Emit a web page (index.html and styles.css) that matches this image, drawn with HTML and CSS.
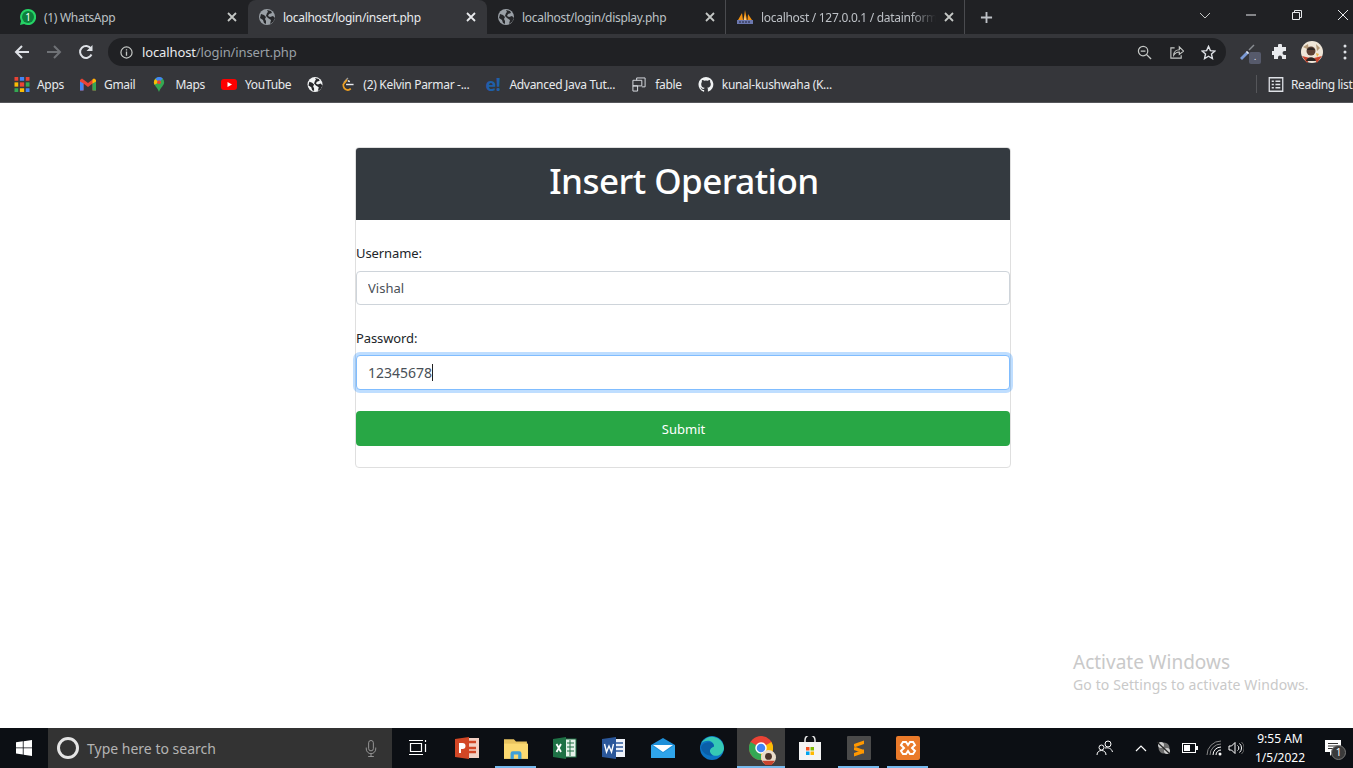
FILE: index.html
```html
<!DOCTYPE html>
<html lang="en">
<head>
    <meta charset="UTF-8">
    <title>Insert Operation</title>
    <link rel="stylesheet" href="styles.css">
</head>
<body>
<svg class="defs" width="0" height="0">
    <symbol id="globe" viewBox="0 0 16 16">
        <circle cx="8" cy="8" r="8" fill="currentColor"/>
        <path d="M2 5l3 1 2 2-1 2 1 2v3l-2-1-1-3-3-2zM8 1l4 1 1 2-3 1-1 2 2 1 3-1 2 2-2 4-3 2 1-4-3-2-2-2 1-3 1-1z" fill="#26272a"/>
    </symbol>
    <symbol id="close" viewBox="0 0 10 10">
        <path d="M1 1l8 8M9 1l-8 8" stroke="currentColor" stroke-width="1.8" fill="none"/>
    </symbol>
</svg>

<!-- tab strip -->
<div class="tabstrip">
    <div class="tab">
        <svg class="fav" viewBox="0 0 16 16"><path d="M8 0a8 8 0 0 0-6.900 12L0 16l4.100-1.100A8 8 0 1 0 8 0z" fill="#25d366"/><circle cx="8" cy="8" r="6" fill="#0d7f3c"/><text x="8" y="11.500" class="fav-num">1</text></svg>
        <span class="tab-title">(1) WhatsApp</span>
        <svg class="tab-close"><use href="#close"/></svg>
    </div>
    <div class="tab active">
        <svg class="fav"><use href="#globe"/></svg>
        <span class="tab-title">localhost/login/insert.php</span>
        <svg class="tab-close"><use href="#close"/></svg>
    </div>
    <div class="tab sep">
        <svg class="fav"><use href="#globe"/></svg>
        <span class="tab-title">localhost/login/display.php</span>
        <svg class="tab-close"><use href="#close"/></svg>
    </div>
    <div class="tab sep">
        <svg class="fav" viewBox="0 0 16 16"><path d="M1 11L5 4l1 7zM6.500 11L8 1l2 10zM10.500 11L11 5l4 6z" fill="#f29111"/><path d="M7 11l1-5 1 5z" fill="#fbd38a"/><rect x="0" y="11" width="16" height="4" fill="#6c78af"/><path d="M2 13h12" stroke="#20243c" stroke-dasharray="2 1"/></svg>
        <span class="tab-title fade">localhost / 127.0.0.1 / datainform</span>
        <svg class="tab-close"><use href="#close"/></svg>
    </div>
    <svg class="newtab" viewBox="0 0 14 14"><path d="M7 1v12M1 7h12" stroke="#bdc1c6" stroke-width="2"/></svg>
    <div class="winctl">
        <svg viewBox="0 0 12 12"><path d="M1 4l5 5 5-5" stroke="#c4c7c5" fill="none"/></svg>
        <svg viewBox="0 0 12 12"><path d="M1 6h10" stroke="#e8eaed"/></svg>
        <svg viewBox="0 0 12 12"><path d="M1.500 3.500h7v7h-7zM3.500 3.500v-2h7v7h-2" stroke="#e8eaed" fill="none"/></svg>
        <svg viewBox="0 0 12 12"><path d="M1 1l10 10M11 1L1 11" stroke="#e8eaed" fill="none"/></svg>
    </div>
</div>

<!-- address bar -->
<div class="toolbar">
    <div class="nav">
        <svg viewBox="0 0 16 16"><path d="M15 8H2M8 2L2 8l6 6" stroke="#dee1e6" stroke-width="2" fill="none"/></svg>
        <svg viewBox="0 0 16 16"><path d="M1 8h13M8 2l6 6-6 6" stroke="#6f7276" stroke-width="2" fill="none"/></svg>
        <svg viewBox="0 0 16 16"><path d="M13.500 10.500A6 6 0 1 1 13 4.500" stroke="#dee1e6" stroke-width="2" fill="none"/><path d="M14.500 1v6h-6z" fill="#dee1e6"/></svg>
    </div>
    <div class="omnibox">
        <svg class="info" viewBox="0 0 14 14"><circle cx="7" cy="7" r="6" stroke="#c4c7c5" stroke-width="1.300" fill="none"/><path d="M7 6v4.500M7 3.500v1.300" stroke="#c4c7c5" stroke-width="1.400"/></svg>
        <span class="url"><b>localhost</b>/login/insert.php</span>
        <div class="omni-actions">
            <svg viewBox="0 0 16 16"><circle cx="6.500" cy="6.500" r="5" stroke="#c4c7c5" stroke-width="1.300" fill="none"/><path d="M4 6.500h5M10 10l5 5" stroke="#c4c7c5" stroke-width="1.500"/></svg>
            <svg viewBox="0 0 16 16"><path d="M6 3H2v11h11v-3" stroke="#c4c7c5" stroke-width="1.200" fill="none"/><path d="M5 11c0-4 3-6 6-6V2l4.500 4.500L11 10V7.500C8.500 7.500 6.500 8.500 5 11z" stroke="#c4c7c5" stroke-width="1.200" fill="none"/></svg>
            <svg viewBox="0 0 16 16"><path d="M8 1.500l2 4.500 4.800.5-3.600 3.200 1 4.800L8 12l-4.200 2.500 1-4.800L1.200 6.500 6 6z" stroke="#dee1e6" stroke-width="1.500" fill="none"/></svg>
        </div>
    </div>
    <div class="ext">
        <span class="ext-pen">
            <svg viewBox="0 0 16 16"><path d="M0 14l7-7 2 2-7 7z" fill="#7b9ad6"/><path d="M7 7l2 2-1 1-2-2z" fill="#e8eaed"/><path d="M9 6l5-5" stroke="#8a8d92" stroke-width="1.500"/></svg>
            <span class="ext-badge">.</span>
        </span>
        <svg viewBox="0 0 16 16"><path d="M6 1.500a2 2 0 0 1 4 0V3h4v4h-1.500a2 2 0 0 0 0 4H14v4h-4v-1.500a2 2 0 0 0-4 0V15H2v-4H.500a2 2 0 0 1 0-4H2V3h4z" fill="#e8eaed"/></svg>
        <svg class="avatar" viewBox="0 0 22 22"><circle cx="11" cy="11" r="11" fill="#efe6d8"/><path d="M2 6l5-3 1 6zM15 3l4 4-3 3z" fill="#b59a78"/><path d="M1 15l8 2-3 5zM21 15l-8 2 3 5z" fill="#c8452f"/><circle cx="10" cy="10" r="4.500" fill="#5b4034"/><path d="M6 9c1-3 7-3 8 0z" fill="#2c2522"/><path d="M5 20c1-5 9-5 10 0z" fill="#2c2522"/><path d="M15 12l3 1-2 3z" fill="#e9b44c"/></svg>
        <svg viewBox="0 0 4 16"><path d="M2 2v.1M2 8v.1M2 14v.1" stroke="#dee1e6" stroke-width="3" stroke-linecap="round"/></svg>
    </div>
</div>

<!-- bookmarks -->
<div class="bookmarks">
    <div class="bm bm-apps">
        <svg class="bm-ico" viewBox="0 0 14 14"><path d="M0 0h3.500v3.500H0z" fill="#ea4335"/><path d="M5 0h4v3.500H5z" fill="#4285f4"/><path d="M10.500 0H14v3.500h-3.500z" fill="#ea4335"/><path d="M0 5h3.500v4H0z" fill="#fbbc05"/><path d="M5 5h4v4H5z" fill="#ea4335"/><path d="M10.500 5H14v4h-3.500z" fill="#34a853"/><path d="M0 10.500h3.500V14H0z" fill="#34a853"/><path d="M5 10.500h4V14H5z" fill="#fbbc05"/><path d="M10.500 10.500H14V14h-3.500z" fill="#4285f4"/></svg>
        Apps
    </div>
    <div class="bm">
        <svg class="bm-ico" viewBox="0 0 16 12"><path d="M0 1.500V12h3.500V5L8 8.500 12.500 5v7H16V1.500L14 0 8 4.500 2 0z" fill="#ea4335"/><path d="M0 3v9h3.500V5z" fill="#4285f4"/><path d="M16 3v9h-3.500V5z" fill="#34a853"/><path d="M14 0l2 1.500V3l-3.500 2V1z" fill="#fbbc05"/></svg>
        Gmail
    </div>
    <div class="bm">
        <svg class="bm-ico" viewBox="0 0 14 16"><path d="M7 0a5.500 5.500 0 0 0-5.500 5.500C1.500 9 5.500 11 7 16c1.500-5 5.500-7 5.500-10.500A5.500 5.500 0 0 0 7 0z" fill="#34a853"/><path d="M3 2a5.500 5.500 0 0 1 8-.500L7 5.500z" fill="#4285f4"/><path d="M1.500 5.500c0 1 .3 1.800.8 2.700L7 5.500 3 2a5.500 5.500 0 0 0-1.500 3.500z" fill="#fbbc05"/><circle cx="7" cy="5.500" r="2" fill="#ea4335"/></svg>
        Maps
    </div>
    <div class="bm">
        <svg class="bm-ico" viewBox="0 0 16 12"><rect width="16" height="11" y=".5" rx="3" fill="#f00"/><path d="M6.500 3.500v5L11 6z" fill="#fff"/></svg>
        YouTube
    </div>
    <div class="bm">
        <svg class="bm-ico globe-bm"><use href="#globe"/></svg>
    </div>
    <div class="bm">
        <svg class="bm-ico" viewBox="0 0 16 16"><path d="M9 1L4.500 6" stroke="#9a9a9a" stroke-width="1.500" fill="none"/><path d="M8 3L4 8c0 3 2 5.500 5 6 1 0 2-.5 3-1.500" stroke="#f0a020" stroke-width="1.800" fill="none"/><path d="M7 8h8" stroke="#e8eaed" stroke-width="1.500"/><path d="M11 5L9 4" stroke="#e8eaed" stroke-width="1.500"/></svg>
        (2) Kelvin Parmar -...
    </div>
    <div class="bm">
        <span class="bm-ico edu">e!</span>
        Advanced Java Tut...
    </div>
    <div class="bm">
        <svg class="bm-ico" viewBox="0 0 16 16"><path d="M5.500 3.500V1h9v9.500H11M1.500 3.500H11v6H1.500zM1.500 9.500h5V15h-5z" stroke="#dee1e6" fill="none"/></svg>
        fable
    </div>
    <div class="bm">
        <svg class="bm-ico" viewBox="0 0 16 16"><path d="M8 0a8 8 0 0 0-2.500 15.600c.4.100.5-.2.500-.4v-1.400c-2.200.5-2.700-1-2.700-1-.4-.9-.9-1.200-.9-1.200-.7-.5.100-.5.100-.5.800.1 1.200.8 1.200.8.700 1.200 1.900.9 2.300.7.100-.5.300-.9.500-1.100-1.800-.2-3.600-.9-3.600-4 0-.9.300-1.600.8-2.100-.1-.2-.4-1 .1-2.100 0 0 .7-.2 2.200.8a7.500 7.500 0 0 1 4 0c1.500-1 2.200-.8 2.200-.8.400 1.100.2 1.900.1 2.100.5.600.8 1.300.8 2.100 0 3.100-1.900 3.700-3.700 3.900.3.300.6.700.6 1.500v2.200c0 .2.100.5.600.4A8 8 0 0 0 8 0z" fill="#f1f3f4"/></svg>
        kunal-kushwaha (K...
    </div>
    <div class="reading">
        <svg class="bm-ico" viewBox="0 0 14 14"><path d="M.7.700h12.600v12.600H.7z" stroke="#dee1e6" stroke-width="1.200" fill="none"/><path d="M3 4h2M6.500 4H11M3 7h2M6.500 7H11M3 10h2M6.500 10H11" stroke="#dee1e6" stroke-width="1.300"/></svg>
        Reading list
    </div>
</div>

<!-- page -->
<main class="page">
    <div class="card">
        <h1 class="card-head">Insert Operation</h1>
        <form class="card-body">
            <label class="lbl" for="username">Username:</label>
            <input class="field" id="username" type="text" value="Vishal">
            <label class="lbl" for="password">Password:</label>
            <div class="field-wrap">
                <input class="field focused" id="password" type="text" value="12345678">
                <span class="caret"></span>
            </div>
            <button class="submit" type="button">Submit</button>
        </form>
    </div>
    <div class="activate">
        <div class="activate-big">Activate Windows</div>
        <div class="activate-small">Go to Settings to activate Windows.</div>
    </div>
</main>

<!-- taskbar -->
<footer class="taskbar">
    <div class="start">
        <svg viewBox="0 0 16 16"><path d="M0 2.300l6.800-1v6.200H0zM7.600 1.200L16 0v7.500H7.600zM0 8.300h6.800v6.300l-6.800-1zM7.600 8.300H16V16l-8.400-1.200z" fill="#fff"/></svg>
    </div>
    <div class="search">
        <span class="cortana"></span>
        <span class="search-text">Type here to search</span>
        <svg class="mic" viewBox="0 0 12 18"><rect x="3.500" y=".5" width="5" height="11" rx="2.500" stroke="#9a9a9a" fill="none"/><path d="M1 8v1.500a5 5 0 0 0 10 0V8M6 14.500v3M3 17.500h6" stroke="#9a9a9a" fill="none"/></svg>
    </div>
    <div class="apps">
        <div class="app app-view"><svg viewBox="0 0 18 18"><path d="M1.500 4.500h11v8h-11zM0 1.500h14M0 15.500h14M16.500 1v2M16.500 5v8" stroke="#fff" stroke-width="1.200" fill="none"/></svg></div>
        <div class="app"><svg viewBox="0 0 24 22"><rect x="11" y="1" width="13" height="20" fill="#f3d0c4"/><path d="M14 5h7M14 11h7M14 15h7" stroke="#d24726" stroke-width="2.500"/><path d="M0 2l14-2v22L0 20z" fill="#d24726"/><path d="M4 6h3.500a2.500 2.500 0 0 1 0 6H6v4H4z" fill="#fff"/></svg></div>
        <div class="app on"><svg viewBox="0 0 22 20"><path d="M0 2h9l2 2h10v5H0z" fill="#e8c35f"/><rect y="6" width="22" height="14" fill="#fbd971"/><path d="M6 20v-5a2 2 0 0 1 2-2h6a2 2 0 0 1 2 2v5h-3v-4H9v4z" fill="#3f9fd8"/></svg></div>
        <div class="app"><svg viewBox="0 0 24 22"><rect x="11" y="2" width="12" height="18" fill="#e6f2ea" stroke="#1e7145"/><path d="M14 6h7M14 10h7M14 14h7M17 3v16" stroke="#1e7145" stroke-width="1"/><path d="M0 2l13-2v22L0 20z" fill="#1e7145"/><path d="M3.500 7l4.500 8M8 7l-4.500 8" stroke="#fff" stroke-width="1.800"/></svg></div>
        <div class="app"><svg viewBox="0 0 24 22"><rect x="11" y="2" width="12" height="18" fill="#eef2fa"/><path d="M14 6h7M14 10h7M14 14h7" stroke="#2b579a" stroke-width="1.600"/><path d="M0 2l14-2v22L0 20z" fill="#2b579a"/><path d="M2.500 7l2 8 2.500-6 2.500 6 2-8" stroke="#fff" stroke-width="1.400" fill="none"/></svg></div>
        <div class="app"><svg viewBox="0 0 24 20"><path d="M0 7L12 0l12 7v13H0z" fill="#1f8fd8"/><path d="M2 7h20l-10 7z" fill="#fff"/><path d="M0 7l12 8 12-8v13H0z" fill="#2fa4ea"/></svg></div>
        <div class="app"><svg viewBox="0 0 24 24"><circle cx="12" cy="12" r="12" fill="#0c74c4"/><path d="M24 12A12 12 0 0 0 1 8c3-4 12-5 13 2 0 1-3 1-4 4-1 5 6 8 11 4 2-2 3-4 3-6z" fill="#36c9b4"/><path d="M14 10c0 1-3 1-4 4-.600 2.500 1 4.500 3 5.500-6 1-11-3-12-8 .5-5 12-8 13-1.500z" fill="#0a5fa8"/></svg></div>
        <div class="app on active">
            <svg viewBox="0 0 24 24"><circle cx="12" cy="12" r="12" fill="#ea4335"/><path d="M12 12L22.400 6A12 12 0 0 1 12 24z" fill="#fbbc05"/><path d="M12 12L12 24A12 12 0 0 1 1.600 6z" fill="#34a853"/><circle cx="12" cy="12" r="5" fill="#4285f4" stroke="#fff" stroke-width="1.500"/></svg>
            <svg class="chrome-face" viewBox="0 0 14 14"><circle cx="7" cy="7" r="7" fill="#e8dccb"/><circle cx="7" cy="6" r="3.200" fill="#4a332a"/><path d="M1 10h12l-3 4H4z" fill="#c8452f"/></svg>
        </div>
        <div class="app"><svg viewBox="0 0 22 24"><path d="M6 6V4a5 5 0 0 1 10 0v2" stroke="#e8e8e8" stroke-width="1.500" fill="none"/><rect y="6" width="22" height="18" fill="#f4f4f4"/><path d="M7 11h3.500v3.500H7z" fill="#f25022"/><path d="M11.500 11H15v3.500h-3.500z" fill="#7fba00"/><path d="M7 15.500h3.500V19H7z" fill="#00a4ef"/><path d="M11.500 15.500H15V19h-3.500z" fill="#ffb900"/></svg></div>
        <div class="app on"><svg viewBox="0 0 24 24"><rect width="24" height="24" rx="1" fill="#4a4a4a"/><path d="M17 4.500L7 8v3.500L17 8zM7 10.500L17 14v3.500L7 14zM17 13.500V17L7 20.500V17z" fill="#ff9800"/></svg></div>
        <div class="app on"><svg viewBox="0 0 24 24"><rect width="24" height="24" rx="2" fill="#ea7a2a"/><path d="M7 6h3l2 3 2-3h3l2 3-3 3 3 3-2 3h-3l-2-3-2 3H7l-2-3 3-3-3-3z" stroke="#fff" stroke-width="2" fill="none"/></svg></div>
    </div>
    <div class="tray">
        <svg class="t-people" viewBox="0 0 18 16"><circle cx="12" cy="4" r="3" stroke="#fff" fill="none"/><circle cx="5.500" cy="7.500" r="2.500" stroke="#fff" fill="none"/><path d="M1 15c0-3 2-4.500 4.500-4.500S10 12 10 15M9 8c3-.5 6.500 0 7.500 4" stroke="#fff" fill="none"/></svg>
        <svg class="t-chev" viewBox="0 0 12 8"><path d="M1 7l5-5 5 5" stroke="#fff" fill="none" stroke-width="1.200"/></svg>
        <svg class="t-net" viewBox="0 0 16 16"><circle cx="8" cy="8" r="5.500" fill="#6f6f6f"/><circle cx="5" cy="5" r="3" fill="#d0d0d0"/><circle cx="11" cy="11" r="3" fill="#d0d0d0"/><path d="M1 2l13 12" stroke="#222" stroke-width="1.200"/></svg>
        <svg class="t-bat" viewBox="0 0 16 10"><rect x=".5" y=".5" width="13" height="9" stroke="#fff" fill="none"/><rect x="2" y="2" width="6" height="6" fill="#fff"/><path d="M14 3h2v4h-2z" fill="#fff"/></svg>
        <svg class="t-wifi" viewBox="0 0 16 16"><path d="M1 15A14 14 0 0 1 15 1M4 15A11 11 0 0 1 15 4" stroke="#888" fill="none"/><path d="M7 15a8 8 0 0 1 8-8M10 15a5 5 0 0 1 5-5" stroke="#fff" fill="none"/><circle cx="14" cy="14" r="1.500" fill="#fff"/></svg>
        <svg class="t-vol" viewBox="0 0 16 14"><path d="M1 5h2.500L7 1.500v11L3.500 9H1z" stroke="#fff" fill="none"/><path d="M9.500 4.500a3 3 0 0 1 0 5M11.500 2.500a6 6 0 0 1 0 9" stroke="#fff" fill="none"/><path d="M13.500 1a8 8 0 0 1 0 12" stroke="#666" fill="none"/></svg>
        <div class="clock"><div>9:55 AM</div><div>1/5/2022</div></div>
        <div class="notif">
            <svg viewBox="0 0 16 16"><path d="M0 0h16v12H8l-3 4v-4H0z" fill="#fff"/><path d="M3 3.500h10M3 6h10M3 8.500h6" stroke="#333"/></svg>
            <span class="notif-num">1</span>
        </div>
    </div>
</footer>
</body>
</html>
```

FILE: styles.css
```css
*{
    margin: 0;
    padding: 0;
    box-sizing: border-box;
}
html, body{
    width: 100%;
    height: 100%;
    overflow: hidden;
}
body{
    display: flex;
    flex-direction: column;
    font-family: "Noto Sans", "Open Sans", sans-serif;
    background-color: #fff;
}
.defs{
    position: absolute;
}
svg{
    display: block;
    flex: none;
}

/* tab strip */
.tabstrip{
    height: 34px;
    background-color: #202124;
    display: flex;
    align-items: stretch;
    padding-left: 9px;
    flex: none;
}
.tab{
    width: 239px;
    display: flex;
    align-items: center;
    padding: 0 9px 0 11px;
    font-size: 12px;
    letter-spacing: -.3px;
    color: #bdc1c6;
    position: relative;
}
.tab.active{
    background-color: #35363a;
    color: #e8eaed;
    border-radius: 8px 8px 0 0;
}
.tab.sep{
    padding-right: 8px;
    border-right: 1px solid #4a4b4f;
    background-clip: content-box;
}
.tab .tab-title{
    flex: 1;
    margin-left: 8px;
    white-space: nowrap;
    overflow: hidden;
}
.tab-title.fade{
    -webkit-mask-image: linear-gradient(to right, #000 85%, transparent 100%);
    mask-image: linear-gradient(to right, #000 85%, transparent 100%);
}
.fav{
    width: 16px;
    height: 16px;
    color: #9aa0a6;
}
.fav-num{
    font-size: 10px;
    fill: #fff;
    text-anchor: middle;
    font-family: "Noto Sans", sans-serif;
}
.tab-close{
    width: 10px;
    height: 10px;
    margin-left: 8px;
    margin-right: 2px;
    color: #c4c7c5;
}
.active .tab-close{
    color: #e8eaed;
}
.newtab{
    width: 13px;
    height: 13px;
    margin: 11px 0 0 15px;
}
.winctl{
    margin-left: auto;
    display: flex;
    align-items: flex-start;
    padding-top: 9px;
    padding-right: 4px;
    gap: 34px;
}
.winctl svg{
    width: 12px;
    height: 12px;
}

/* toolbar */
.toolbar{
    height: 34px;
    padding-top: 2px;
    background-color: #35363a;
    display: flex;
    align-items: center;
    flex: none;
}
.nav{
    display: flex;
    gap: 16px;
    padding-left: 14px;
    width: 108px;
}
.nav svg{
    width: 16px;
    height: 16px;
}
.omnibox{
    width: 1118px;
    height: 28px;
    border-radius: 14px;
    background-color: #202124;
    display: flex;
    align-items: center;
    padding: 0 10px 0 12px;
}
.info{
    width: 13px;
    height: 13px;
}
.url{
    margin-left: 9px;
    font-size: 13px;
    letter-spacing: -.12px;
    color: #9aa0a6;
}
.url b{
    font-weight: normal;
    color: #e8eaed;
}
.omni-actions{
    margin-left: auto;
    display: flex;
    gap: 17px;
}
.omni-actions svg{
    width: 15px;
    height: 15px;
}
.ext{
    display: flex;
    align-items: center;
    padding-left: 14px;
}
.ext > svg{
    width: 16px;
    height: 16px;
    margin-left: 16px;
}
.ext > .avatar{
    width: 22px;
    height: 22px;
    margin-left: 13px;
}
.ext > svg:last-child{
    width: 4px;
    margin-left: 20px;
}
.ext-pen{
    width: 16px;
    height: 16px;
    position: relative;
}
.ext-pen svg{
    width: 16px;
    height: 16px;
}
.ext-badge{
    position: absolute;
    left: 9px;
    top: 8px;
    width: 12px;
    height: 12px;
    border-radius: 2px;
    background-color: #565a6b;
    color: #fff;
    font-size: 8px;
    line-height: 9px;
    text-align: center;
}

/* bookmarks */
.bookmarks{
    height: 35px;
    padding: 0 0 2px 14px;
    background-color: #35363a;
    border-bottom: 1px solid #55565a;
    display: flex;
    align-items: center;
    gap: 16px;
    font-size: 12px;
    letter-spacing: -.3px;
    color: #e8eaed;
    white-space: nowrap;
    flex: none;
}
.bm{
    display: flex;
    align-items: center;
    gap: 8px;
}
.bm-apps{
    gap: 7px;
}
.bm-ico{
    width: 16px;
    height: 15px;
}
.globe-bm{
    color: #f1f3f4;
}
.edu{
    color: #1f5fa8;
    font-size: 18px;
    line-height: 15px;
    font-weight: bold;
}
.reading{
    margin-left: auto;
    width: 97px;
    border-left: 1px solid #55565a;
    height: 18px;
    display: flex;
    align-items: center;
    gap: 7px;
    padding-left: 11px;
    letter-spacing: -.35px;
}

/* page */
.page{
    flex: 1;
    position: relative;
    padding: 44px 0 0 355px;
}
.card{
    width: 656px;
    border: 1px solid #dfdfdf;
    border-radius: 4px;
}
.card-head{
    height: 72px;
    padding-left: 2px;
    background-color: #343a40;
    border-radius: 3px 3px 0 0;
    color: #fff;
    font-size: 35px;
    font-weight: 500;
    letter-spacing: -.55px;
    text-align: center;
    line-height: 66px;
}
.card-body{
    padding-bottom: 21px;
    display: flex;
    flex-direction: column;
}
.lbl{
    font-size: 13px;
    letter-spacing: -.1px;
    line-height: 24px;
    color: #212529;
    margin-top: 21px;
    margin-bottom: 6px;
}
.field{
    width: 100%;
    height: 34px;
    display: block;
    border: 1px solid #ced4da;
    border-radius: 4px;
    padding: 0 11px 1px;
    font-family: inherit;
    font-size: 13px;
    color: #495057;
    background-color: #fff;
    outline: none;
}
.field.focused{
    height: 35px;
    font-size: 14px;
    border-color: #80bdff;
    box-shadow: 0 0 0 3px rgba(0, 123, 255, .25);
}
.field-wrap{
    position: relative;
    margin-top: -1px;
}
.caret{
    position: absolute;
    left: 76px;
    top: 9px;
    width: 1px;
    height: 17px;
    background-color: #222;
}
.submit{
    height: 35px;
    margin-top: 21px;
    padding-left: 1px;
    border: 0;
    border-radius: 4px;
    background-color: #28a745;
    color: #fff;
    font-family: inherit;
    font-size: 13px;
}
.activate{
    position: absolute;
    left: 1073px;
    top: 547px;
    color: #c9c9c9;
}
.activate-big{
    font-size: 19px;
    line-height: 24px;
}
.activate-small{
    font-size: 14px;
    letter-spacing: .11px;
    line-height: 22px;
}

/* taskbar */
.taskbar{
    height: 40px;
    background-color: #0c0f14;
    display: flex;
    align-items: stretch;
    flex: none;
    color: #fff;
}
.start{
    width: 48px;
    display: flex;
    align-items: center;
    justify-content: center;
}
.start svg{
    width: 16px;
    height: 16px;
}
.search{
    width: 344px;
    background-color: #333;
    display: flex;
    align-items: center;
    padding: 0 15px 0 9px;
}
.cortana{
    width: 22px;
    height: 22px;
    border-radius: 50%;
    border: 3px solid #e4e4e4;
}
.search-text{
    margin-left: 8px;
    font-size: 14px;
    color: #b4b4b4;
}
.mic{
    width: 12px;
    height: 17px;
    margin-left: auto;
}
.apps{
    display: flex;
    padding-left: 1px;
}
.app{
    width: 49px;
    position: relative;
    display: flex;
    align-items: center;
    justify-content: center;
}
.app svg{
    width: 24px;
    height: 24px;
}
.app-view svg{
    width: 18px;
    height: 18px;
}
.app.on::after{
    content: "";
    position: absolute;
    left: 4px;
    right: 4px;
    bottom: 0;
    height: 2px;
    background-color: #76b9ed;
}
.app.active{
    width: 48px;
    margin-left: 1px;
    background-color: #3f3f3f;
}
.app.active::after{
    left: 0;
    right: 0;
}
.app .chrome-face{
    position: absolute;
    width: 15px;
    height: 15px;
    left: 24px;
    top: 22px;
}
.tray{
    margin-left: auto;
    display: flex;
    align-items: center;
    font-size: 12px;
}
.t-people{
    width: 18px;
    height: 16px;
}
.t-chev{
    width: 12px;
    height: 8px;
    margin-left: 21px;
}
.t-net{
    width: 16px;
    height: 16px;
    margin-left: 9px;
}
.t-bat{
    width: 16px;
    height: 10px;
    margin-left: 10px;
}
.t-wifi{
    width: 16px;
    height: 16px;
    margin-left: 8px;
}
.t-vol{
    width: 16px;
    height: 14px;
    margin-left: 6px;
}
.clock{
    width: 64px;
    margin-left: 4px;
    text-align: center;
    line-height: 19px;
}
.notif{
    width: 16px;
    height: 16px;
    margin: 0 12px 0 13px;
    position: relative;
}
.notif svg{
    width: 16px;
    height: 16px;
}
.notif-num{
    position: absolute;
    left: 6px;
    top: 5px;
    width: 15px;
    height: 15px;
    border-radius: 50%;
    background-color: #3a3a3a;
    border: 1px solid #777;
    font-size: 10px;
    line-height: 13px;
    text-align: center;
}
```
